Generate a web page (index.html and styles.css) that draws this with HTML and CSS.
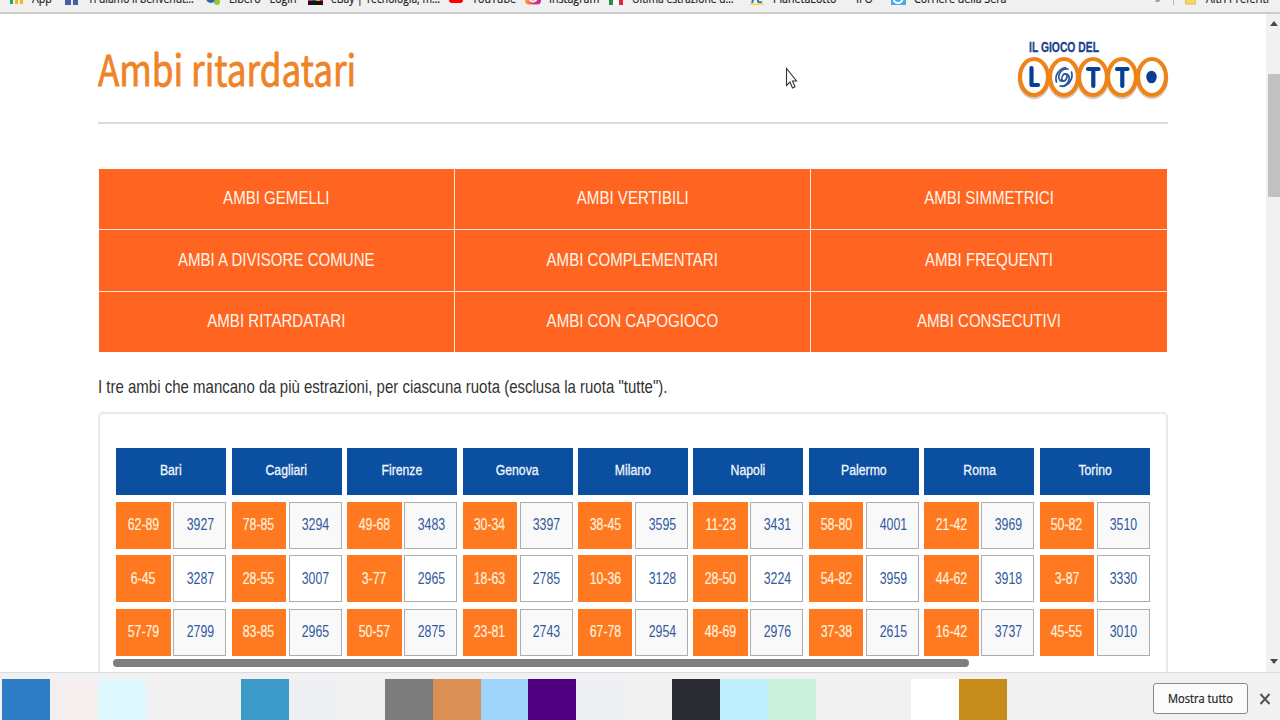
FILE: index.html
```
<!DOCTYPE html>
<html lang="it">
<head>
<meta charset="utf-8">
<title>Ambi ritardatari</title>
<link rel="stylesheet" href="styles.css">
</head>
<body>
<div class="window">
  <nav class="bookmarks">
    <div class="mark m-app"><svg class="ico" viewBox="0 0 16 16"><path fill="#ef4a35" d="M2 1h3v3H2zM2 6h3v3H2z"/><path fill="#22a565" d="M2 11h3v4H2z"/><path fill="#f5b81c" d="M7 6h3v3H7zM7 11h3v4H7zM12 6h3v3h-3zM12 11h3v4h-3z"/></svg><span>App</span></div>
    <div class="mark m-fb"><svg class="ico" viewBox="0 0 16 16"><path fill="#4460a5" d="M1 1h13v15H1z"/><path fill="#e8edf5" d="M7 8h2v8H7z"/></svg><span class="tight">Ti diamo il benvenut…</span></div>
    <div class="mark m-lib"><svg class="ico" viewBox="0 0 16 16"><circle cx="6" cy="9" r="5" fill="#2465ab"/><circle cx="12" cy="13" r="3" fill="#8dc63f"/></svg><span>Libero - Login</span></div>
    <div class="mark m-ebay"><svg class="ico" viewBox="0 0 16 16"><path fill="#171717" d="M1 1h15v15H1z"/><path fill="#e53238" d="M1 4h4v8H1z"/><path fill="#0064d2" d="M5 4h4v8H5z"/><path fill="#f5af02" d="M9 4h4v8H9z"/><path fill="#d52430" d="M13 4h3v8h-3z"/></svg><span class="tight">eBay | Tecnologia, m…</span></div>
    <div class="mark m-yt"><svg class="ico" viewBox="0 0 16 16"><rect x="1" y="1" width="14" height="13" rx="3" fill="#f00"/></svg><span>YouTube</span></div>
    <div class="mark m-ig"><svg class="ico" viewBox="0 0 16 16"><defs><linearGradient id="ig" x1="0" x2="1"><stop stop-color="#fba646"/><stop offset=".55" stop-color="#e33c5c"/><stop offset="1" stop-color="#b12ba0"/></linearGradient></defs><rect width="16" height="15.500" rx="4" fill="url(#ig)"/><circle cx="8" cy="8.500" r="4" fill="none" stroke="#fff" stroke-width="1.800"/></svg><span>Instagram</span></div>
    <div class="mark m-est"><svg class="ico" viewBox="0 0 16 16"><path fill="#239052" d="M1 0h4v16H1z"/><path fill="#fff" d="M5 0h6v16H5z"/><path fill="#dc2936" d="M11 0h4v16h-4z"/></svg><span class="tight">Ultima estrazione d…</span></div>
    <div class="mark m-pl"><svg class="ico" viewBox="0 0 16 16"><path d="M3 14l3-9h4M9 6v6q0 2 4 1" fill="none" stroke="#2d78bb" stroke-width="2"/><path fill="#f5db35" d="M1 14.500h14V16H1z"/></svg><span>PianetaLotto</span></div>
    <div class="mark m-if"><span>IFO</span></div>
    <div class="mark m-cor"><svg class="ico" viewBox="0 0 16 16"><path fill="#45ade3" d="M1 0h15v16H1z"/><circle cx="8" cy="9.500" r="4.500" fill="none" stroke="#fff" stroke-width="2"/></svg><span>Corriere della Sera</span></div>
    <div class="mark m-more"><span>»</span></div>
    <div class="mark m-alt"><svg class="ico" viewBox="0 0 16 16"><path fill="#f6d76a" stroke="#dfbd4e" d="M3.500 1h10v14h-10z"/></svg><span>Altri Preferiti</span></div>
  </nav>

  <div class="viewport">
    <main class="page">
      <header class="head">
        <h1 class="title"><span>Ambi ritardatari</span></h1>
        <svg class="logo" viewBox="1014 36 158 66" width="158" height="66">
          <text class="logo-top" x="1029" y="51.700" textLength="70" lengthAdjust="spacingAndGlyphs">IL GIOCO DEL</text>
          <g fill="none" stroke="#b9a08f" stroke-width="4.500" opacity=".55"><ellipse cx="1034" cy="79" rx="14" ry="18"/><ellipse cx="1064" cy="79" rx="14" ry="18"/><ellipse cx="1093" cy="79" rx="14" ry="18"/><ellipse cx="1122" cy="79" rx="14" ry="18"/><ellipse cx="1152" cy="79" rx="14" ry="18"/></g>
          <g fill="#fff" stroke="#ee8418" stroke-width="4.200"><ellipse cx="1034" cy="77" rx="14" ry="18"/><ellipse cx="1064" cy="77" rx="14" ry="18"/><ellipse cx="1093" cy="77" rx="14" ry="18"/><ellipse cx="1122" cy="77" rx="14" ry="18"/><ellipse cx="1152" cy="77" rx="14" ry="18"/></g>
          <g fill="none" stroke="#073f94" stroke-width="4.200" stroke-linejoin="round" stroke-linecap="round"><path d="M1031.500 68V85H1038M1088 69H1098.500M1093.300 69V86M1117 69H1127.500M1122.300 69V86"/></g>
          <ellipse cx="1151.500" cy="77" rx="5.200" ry="6.300" fill="#073f94"/>
          <g fill="none" stroke="#28559c" stroke-width="1.700" stroke-linecap="round">
            <path d="M1064 74c4-1 4 5 0 7-4 1-6-2-5-6 1-4 5-7 9-6"/>
            <path d="M1064 81c-3 0-3-4 0-7 4-1 6 2 5 6-1 4-5 7-9 6"/>
            <path d="M1056.500 82c-2-6 2-13 9-14.500M1071.500 72c2 6-2 13-9 14.500"/>
          </g>
        </svg>
      </header>

      <div class="menu">
        <a><span>AMBI GEMELLI</span></a><a><span>AMBI VERTIBILI</span></a><a><span>AMBI SIMMETRICI</span></a>
        <a><span>AMBI A DIVISORE COMUNE</span></a><a><span>AMBI COMPLEMENTARI</span></a><a><span>AMBI FREQUENTI</span></a>
        <a><span>AMBI RITARDATARI</span></a><a><span>AMBI CON CAPOGIOCO</span></a><a><span>AMBI CONSECUTIVI</span></a>
      </div>

      <p class="intro"><span>I tre ambi che mancano da più estrazioni, per ciascuna ruota (esclusa la ruota "tutte").</span></p>

      <section class="panel">
        <div class="wheels">
          <div class="wheel"><b><span>Bari</span></b><i><span>62-89</span></i><em><span>3927</span></em><i><span>6-45</span></i><em><span>3287</span></em><i><span>57-79</span></i><em><span>2799</span></em></div>
          <div class="wheel"><b><span>Cagliari</span></b><i><span>78-85</span></i><em><span>3294</span></em><i><span>28-55</span></i><em><span>3007</span></em><i><span>83-85</span></i><em><span>2965</span></em></div>
          <div class="wheel"><b><span>Firenze</span></b><i><span>49-68</span></i><em><span>3483</span></em><i><span>3-77</span></i><em><span>2965</span></em><i><span>50-57</span></i><em><span>2875</span></em></div>
          <div class="wheel"><b><span>Genova</span></b><i><span>30-34</span></i><em><span>3397</span></em><i><span>18-63</span></i><em><span>2785</span></em><i><span>23-81</span></i><em><span>2743</span></em></div>
          <div class="wheel"><b><span>Milano</span></b><i><span>38-45</span></i><em><span>3595</span></em><i><span>10-36</span></i><em><span>3128</span></em><i><span>67-78</span></i><em><span>2954</span></em></div>
          <div class="wheel"><b><span>Napoli</span></b><i><span>11-23</span></i><em><span>3431</span></em><i><span>28-50</span></i><em><span>3224</span></em><i><span>48-69</span></i><em><span>2976</span></em></div>
          <div class="wheel"><b><span>Palermo</span></b><i><span>58-80</span></i><em><span>4001</span></em><i><span>54-82</span></i><em><span>3959</span></em><i><span>37-38</span></i><em><span>2615</span></em></div>
          <div class="wheel"><b><span>Roma</span></b><i><span>21-42</span></i><em><span>3969</span></em><i><span>44-62</span></i><em><span>3918</span></em><i><span>16-42</span></i><em><span>3737</span></em></div>
          <div class="wheel"><b><span>Torino</span></b><i><span>50-82</span></i><em><span>3510</span></em><i><span>3-87</span></i><em><span>3330</span></em><i><span>45-55</span></i><em><span>3010</span></em></div>
        </div>
        <div class="hscroll"></div>
      </section>
    </main>
    <aside class="vscroll">
      <svg viewBox="0 0 8 5" width="8" height="5"><path d="M0 5L4 0l4 5z" fill="#484848"/></svg>
      <div class="thumb"></div>
      <svg class="down" viewBox="0 0 8 5" width="8" height="5"><path d="M0 0l4 5 4-5z" fill="#484848"/></svg>
    </aside>
  </div>

  <footer class="downloads">
    <div class="swatches">
      <div class="s-blue"></div><div class="s-rose"></div><div class="s-ice"></div><div></div><div></div><div class="s-teal"></div><div class="s-mist"></div><div></div><div class="s-gray"></div><div class="s-tan"></div><div class="s-sky"></div><div class="s-purple"></div><div class="s-mist"></div><div></div><div class="s-ink"></div><div class="s-aqua"></div><div class="s-mint"></div><div></div><div></div><div class="s-white"></div><div class="s-gold"></div>
    </div>
    <div class="show-all"><span>Mostra tutto</span></div>
    <svg class="close" viewBox="0 0 12 12" width="12" height="12"><path d="M1.500 1l9 10M10.500 1l-9 10" stroke="#555" stroke-width="2" fill="none"/></svg>
  </footer>

  <svg class="cursor" viewBox="0 0 14 24" width="14" height="24"><path d="M1.500 1.500v17l3.500-3.500 2.500 6 2.500-1.200-2.500-5.800h4z" fill="#fff" stroke="#333" stroke-width="1.100"/></svg>
</div>
</body>
</html>
```
FILE: styles.css
```
* { box-sizing: border-box; }
body { margin: 0; background: #fff; font-family: "Liberation Sans", Arial, sans-serif; }
.window { position: relative; width: 1280px; height: 720px; overflow: hidden; display: flex; flex-direction: column; }
span { display: inline-block; white-space: nowrap; }

/* bookmarks bar, scrolled partly past the top edge */
.bookmarks {
  height: 14px; flex: none; overflow: hidden; display: grid; align-content: end;
  grid-template-columns: 56px 141px 102px 141px 77px 83px 141px 107px 34px 265px 18px 107px;
  padding: 0 0 7px 8px; background: #f1f0f1; border-bottom: 2px solid #cbcbcb;
  font: 12px/16px "Open Sans", "Noto Sans", sans-serif; color: #222;
}
.mark { display: flex; height: 16px; gap: 8px; align-items: center; }
.mark .ico { width: 16px; height: 16px; flex: none; }
.mark span { transform: translateY(1.500px) scaleX(.89); transform-origin: left; -webkit-text-stroke: .2px #222; }
.mark .tight { transform: translateY(1.500px) scaleX(.86); }
.m-more { color: #999; }
.m-alt { border-left: 1px solid #bbb; padding-left: 8px; }

.viewport { flex: 1; min-height: 0; display: flex; overflow: hidden; }
.page { flex: 1; min-width: 0; padding: 0 98px; }
.head { height: 110px; display: flex; justify-content: space-between; border-bottom: 2px solid #dcdcdc; width: 1070px; }
.title { margin: 0; padding-top: 18px; font: 400 42px/72px "Noto Sans CJK SC", sans-serif; color: #ef8427; }
.title span { transform: scaleX(.836); transform-origin: left; -webkit-text-stroke: .8px #ef8427; }
.logo { margin: 22px -4px 0 0; flex: none; }
.logo-top { font: bold 15px "Liberation Sans", Arial, sans-serif; fill: #1a4488; stroke: #1a4488; stroke-width: .3px; }

.menu {
  margin: 45px 0 0 1px; width: 1068px; height: 183.400px; display: grid;
  grid-template-columns: 355px 355px 356px; grid-template-rows: repeat(3, 1fr);
  gap: 1px; background: #ffe9dc;
}
.menu a { display: flex; align-items: center; justify-content: center; background: #ff6520; color: #fff4eb; font-size: 19px; }
.menu span { transform: translate(.2px, -.7px) scaleX(.793); }

.intro { margin: 22.600px 0 0; font-size: 18.500px; line-height: 24px; color: #333; width: 1070px; }
.intro span { transform: scaleX(.811); transform-origin: left; }

.panel { margin-top: 13px; width: 1070px; height: 300px; border: 2px solid #e9e9e9; border-radius: 5px; padding: 34px 16px 0; }
.wheels { display: grid; grid-template-columns: repeat(9, 110px); column-gap: 5.450px; margin-left: .2px; }
.wheel { display: grid; grid-template-columns: 54.500px 53px; grid-template-rows: repeat(4, 47px); gap: 6.650px 2.500px; font-size: 16px; }
.wheel > * { display: flex; align-items: center; justify-content: center; font-style: normal; font-weight: 400; }
.wheel b { grid-column: 1 / 3; background: #0a4fa0; color: #f3f7fc; font-size: 15.500px; -webkit-text-stroke: .3px #f3f7fc; }
.wheel i { background: #ff7920; color: #fff1df; -webkit-text-stroke: .2px #fff1df; }
.wheel em { background: #f9f9f9; border: 1px solid #adadad; color: #315a9d; }
.wheel em:nth-of-type(2) { background: #fff; }
.wheel span { transform: scaleX(.77); }
.wheel b span { transform: translateY(-1px) scaleX(.79); }
.wheel em span { transform: translateX(.6px) scaleX(.77); }
.hscroll { margin: 3px 0 0 -3px; width: 856px; height: 8px; border-radius: 4px; background: #7e7e7e; }

.vscroll { width: 14px; flex: none; background: #f1f1f1; padding-top: 7px; display: flex; flex-direction: column; align-items: center; }
.vscroll svg { margin-left: 2px; flex: none; }
.thumb { width: 12px; margin: 48px 0 0 2px; height: 123px; background: #c1c1c1; }
.down { margin-top: auto; margin-bottom: 8px; }

/* downloads bar */
.downloads { height: 48px; flex: none; display: flex; background: #f1f1f1; border-top: 1px solid #dbdbdb; }
.swatches { display: grid; grid-template-columns: repeat(21, 47.860px); padding: 6px 0 0 2px; width: 1153px; flex: none; }
.s-blue { background: #2f7cc7; }
.s-rose { background: #f4eeee; }
.s-ice { background: #def6fd; }
.s-teal { background: #3b9ac8; }
.s-mist { background: #eeeff3; }
.s-gray { background: #7c7c7c; }
.s-tan { background: #da9054; }
.s-sky { background: #9fd5fb; }
.s-purple { background: #4e0080; }
.s-ink { background: #2a2b30; }
.s-aqua { background: #bdeefb; }
.s-mint { background: #cbf1df; }
.s-white { background: #fff; }
.s-gold { background: #c68c1b; }
.show-all {
  width: 95px; height: 31px; margin-top: 10px; display: flex; align-items: center; justify-content: center;
  background: #fbfbfb; border: 1px solid #8b8b8b; border-radius: 3px;
  font: 12.500px "Open Sans", "Noto Sans", sans-serif; color: #181818; -webkit-text-stroke: .2px #181818;
}
.show-all span { transform: scaleX(.89); }
.close { margin: 20px 0 0 11px; }

.cursor { position: absolute; left: 785px; top: 67px; }
```
